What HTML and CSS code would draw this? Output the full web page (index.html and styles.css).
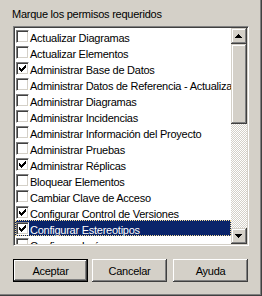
FILE: index.html
```html
<!DOCTYPE html>
<html lang="es">
<head>
    <meta charset="UTF-8">
    <title>Permisos</title>
    <link rel="stylesheet" href="styles.css">
</head>
<body>
    <div class="dialog">
        <div class="prompt">Marque los permisos requeridos</div>

        <div class="listbox">
            <ul class="items">
                <li class="item"><span class="check"></span><span class="label">Actualizar Diagramas</span></li>
                <li class="item"><span class="check"></span><span class="label">Actualizar Elementos</span></li>
                <li class="item"><span class="check"><svg width="11" height="11"><path d="M2 4h1v1h1v1h1v-1h1v-1h1v-1h1v-1h1v3h-1v1h-1v1h-1v1h-1v1h-1v-1h-1v-1h-1z"/></svg></span><span class="label">Administrar Base de Datos</span></li>
                <li class="item"><span class="check"></span><span class="label">Administrar Datos de Referencia - Actualizar</span></li>
                <li class="item"><span class="check"></span><span class="label">Administrar Diagramas</span></li>
                <li class="item"><span class="check"></span><span class="label">Administrar Incidencias</span></li>
                <li class="item"><span class="check"></span><span class="label">Administrar Información del Proyecto</span></li>
                <li class="item"><span class="check"></span><span class="label">Administrar Pruebas</span></li>
                <li class="item"><span class="check"><svg width="11" height="11"><path d="M2 4h1v1h1v1h1v-1h1v-1h1v-1h1v-1h1v3h-1v1h-1v1h-1v1h-1v1h-1v-1h-1v-1h-1z"/></svg></span><span class="label">Administrar Réplicas</span></li>
                <li class="item"><span class="check"></span><span class="label">Bloquear Elementos</span></li>
                <li class="item"><span class="check"></span><span class="label">Cambiar Clave de Acceso</span></li>
                <li class="item"><span class="check"><svg width="11" height="11"><path d="M2 4h1v1h1v1h1v-1h1v-1h1v-1h1v-1h1v3h-1v1h-1v1h-1v1h-1v1h-1v-1h-1v-1h-1z"/></svg></span><span class="label">Configurar Control de Versiones</span></li>
                <li class="item selected"><span class="check"><svg width="11" height="11"><path d="M2 4h1v1h1v1h1v-1h1v-1h1v-1h1v-1h1v3h-1v1h-1v1h-1v1h-1v1h-1v-1h-1v-1h-1z"/></svg></span><span class="label">Configurar Estereotipos</span></li>
                <li class="item"><span class="check"></span><span class="label">Configurar Imágenes</span></li>
            </ul>

            <div class="scrollbar">
                <div class="sb-btn"><svg width="16" height="16"><path d="M7 6h1v1h1v1h1v1h1v1h-7v-1h1v-1h1v-1h1z"/></svg></div>
                <div class="sb-thumb"></div>
                <div class="sb-track"></div>
                <div class="sb-btn"><svg width="16" height="16"><path d="M4 6h7v1h-1v1h-1v1h-1v1h-1v-1h-1v-1h-1v-1h-1z"/></svg></div>
            </div>
        </div>

        <div class="buttons">
            <button class="btn default">Aceptar</button>
            <button class="btn cancel">Cancelar</button>
            <button class="btn help">Ayuda</button>
        </div>
    </div>
</body>
</html>
```

FILE: styles.css
```css
* {
    box-sizing: border-box;
}

body {
    margin: 0;
    background: #d4d0c8;
    font-family: 'Liberation Sans', Arial, sans-serif;
    font-size: 11px;
    letter-spacing: -0.25px;
    color: #000;
}

.dialog {
    width: 262px;
    height: 296px;
    padding-top: 8px;
    border-right: 1px solid #404040;
    border-bottom: 1px solid #404040;
    box-shadow: inset -1px -1px #808080;
}

.prompt {
    margin-left: 12px;
    height: 13px;
    line-height: 13px;
}

/* lista con casillas */
.listbox {
    display: flex;
    width: 236px;
    height: 220px;
    margin: 5px 0 0 13px;
    padding: 1px;
    background: #fff;
    border: 1px solid;
    border-color: #808080 #fff #fff #808080;
    box-shadow: inset 1px 1px #404040, inset -1px -1px #d4d0c8;
}

.items {
    flex: 1;
    margin: 0;
    padding: 0;
    list-style: none;
    overflow: hidden;
}

.item {
    display: flex;
    height: 16px;
    white-space: nowrap;
    overflow: hidden;
}

.check {
    flex: none;
    width: 13px;
    height: 13px;
    margin: 2px 0 0 1px;
    background: #fff;
    border: 1px solid;
    border-color: #808080 #fff #fff #808080;
    box-shadow: inset 1px 1px #404040, inset -1px -1px #d4d0c8;
}

.check svg {
    display: block;
    margin: 0;
    fill: #000;
    shape-rendering: crispEdges;
}

.label {
    padding: 3px 0 0 1px;
    line-height: 14px;
}

.item.selected {
    background: #0a246a;
    color: #fff;
    outline: 1px dotted #f5db95;
    outline-offset: -1px;
}

/* barra de desplazamiento */
.scrollbar {
    display: flex;
    flex-direction: column;
    width: 16px;
}

.sb-btn, .sb-thumb {
    background: #d4d0c8;
    box-shadow: inset -1px -1px #404040, inset 1px 1px #d4d0c8,
                inset -2px -2px #808080, inset 2px 2px #fff;
}

.sb-btn {
    height: 16px;
}

.sb-btn svg {
    display: block;
    fill: #000;
    shape-rendering: crispEdges;
}

.sb-thumb {
    height: 80px;
}

.sb-track {
    flex: 1;
    background: repeating-conic-gradient(#fff 0 25%, #d4d0c8 0 50%) 0 0 / 2px 2px;
}

/* botones */
.buttons {
    display: flex;
    margin: 13px 0 0 13px;
}

.btn {
    width: 75px;
    height: 23px;
    padding: 0;
    font: inherit;
    letter-spacing: inherit;
    color: #000;
    background: #d4d0c8;
    border: none;
    box-shadow: inset -1px -1px #404040, inset 1px 1px #fff,
                inset -2px -2px #808080, inset 2px 2px #d4d0c8;
}

.btn.default {
    border: 1px solid #000;
    box-shadow: inset -1px -1px #404040, inset 1px 1px #fff,
                inset -2px -2px #808080;
}

.btn.cancel {
    margin-left: 4px;
}

.btn.help {
    margin-left: 6px;
}
```
